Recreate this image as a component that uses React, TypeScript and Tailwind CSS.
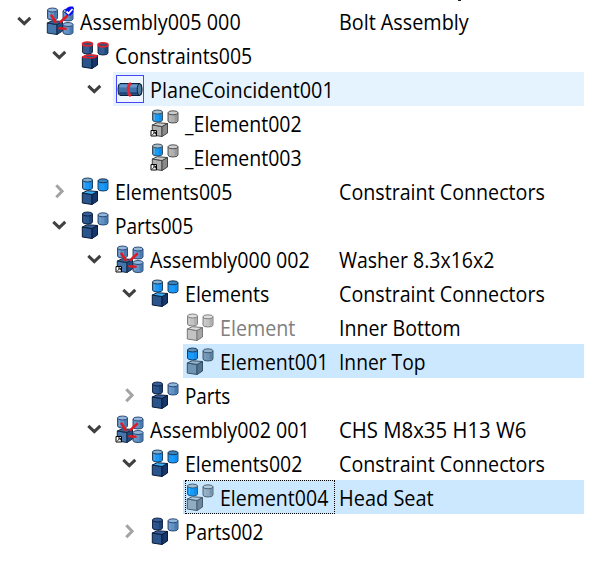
import { useLayoutEffect, useRef, useState } from "react";

type Tone = { body: string; top: string; dark: string; line: string };

const STEEL: Tone = { body: "#4577ad", top: "#3c638f", dark: "#234a7c", line: "#12294a" };
const NAVY: Tone = { body: "#2a548c", top: "#35609a", dark: "#15376b", line: "#0a1c3a" };
const BRIGHT: Tone = { body: "#1a9bfc", top: "#7fb0d2", dark: "#0c84e8", line: "#12304f" };
const SKY: Tone = { body: "#169bf8", top: "#a4bccb", dark: "#0b83e2", line: "#36424c" };
const GREY: Tone = { body: "#b0b0b0", top: "#cdcdcd", dark: "#8a8a8a", line: "#444444" };
const FADED: Tone = { body: "#c3c3c3", top: "#dedede", dark: "#a5a5a5", line: "#777777" };
const SLATE: Tone = { body: "#7095b5", top: "#93b3cc", dark: "#4f748f", line: "#344f68" };
const MIST: Tone = { body: "#8facc3", top: "#aec8dc", dark: "#6c879d", line: "#485b6c" };
const SOFT: Tone = { body: "#6291c4", top: "#93b6dc", dark: "#3d6ba2", line: "#20406b" };
const REDTOP: Tone = { body: "#315d96", top: "#4a4a68", dark: "#18396a", line: "#101f3c" };

function Cylinder({ x, y, w, h, t, rim }: { x: number; y: number; w: number; h: number; t: Tone; rim?: string }) {
  const r = w / 2;
  return (
    <g stroke={t.line} strokeWidth=".9">
      <path d={`M${x} ${y + 2}v${h - 4}a${r} 2 0 0 0 ${w} 0v${4 - h}z`} fill={t.body} />
      <path d={`M${x + w - 2} ${y + 3}v${h - 4.5}`} stroke={t.dark} strokeWidth="3" opacity=".6" />
      <path d={`M${x + 2} ${y + 4}v${h - 6}`} stroke={t.top} opacity=".6" />
      <ellipse cx={x + r} cy={y + 2} rx={r} ry="2" fill={t.top} stroke={rim ?? t.line} strokeWidth={rim ? 1.6 : 0.9} />
    </g>
  );
}

function Cube({ t, rim, lid }: { t: Tone; rim?: string; lid?: string }) {
  return (
    <g stroke={t.line} strokeWidth="1" strokeLinejoin="round">
      <path d="M1.300 16l9.700 1.500v10l-9.700-1.500z" fill={t.body} />
      <path d="M11 17.500l5.500-3v9.500l-5.500 3.500z" fill={t.dark} />
      <path d="M1.300 16l5-2.300 10.200.800-5.500 3z" fill={lid ?? t.top} />
      {rim && <path d="M1.800 16q3-2 7-2t7 .800q-2.500 2.200-6 2.200t-8-1z" fill={t.body} stroke={rim} strokeWidth="1.600" />}
    </g>
  );
}

function LinkArrow() {
  return (
    <g>
      <path d="M0 21.500h5.500V27H0z" fill="#fff" stroke="#000" strokeWidth="1" />
      <path d="M1.500 25.800L4 23.300M2 23h2.300v2.300" fill="none" stroke="#000" strokeWidth="1" />
    </g>
  );
}

type Kind =
  | "root" | "assembly" | "constraints" | "plane" | "linked" | "elements"
  | "parts" | "faded" | "element" | "element-light";

function Icon({ kind }: { kind: Kind }) {
  if (kind === "plane") {
    return (
      <svg className="block size-7 shrink-0 overflow-visible" viewBox="0 0 28 28">
        <rect x=".500" y=".500" width="27" height="27" fill="#eef6ff" stroke="#4646fa" />
        <path d="M4 8.500h20q2 0 2 6t-2 6H4q-2 0-2-6t2-6z" fill="#3f71aa" stroke="#0c2038" />
        <path d="M3.500 11h19" stroke="#6796c8" strokeWidth="3" />
        <path d="M3.500 18.500h19" stroke="#1d4475" strokeWidth="2.500" />
        <ellipse cx="23.500" cy="14.500" rx="2.300" ry="5.800" fill="#54799f" stroke="#0c2038" />
        <path d="M15 8.300q-2.800 1-2.800 6.200t2.800 6.200" fill="none" stroke="#e02834" strokeWidth="3" />
      </svg>
    );
  }
  if (kind === "root" || kind === "assembly") {
    return (
      <svg className="block size-7 shrink-0 overflow-visible" viewBox="0 0 28 28">
        <Cylinder x={1.5} y={1} w={10} h={12} t={SOFT} />
        <Cylinder x={17} y={2} w={10} h={12} t={SOFT} />
        <Cube t={STEEL} />
        <Cylinder x={17} y={15.5} w={10} h={12} t={SOFT} />
        <path d="M5.500 8.500l4 6.500M21 9l-6.500 6M13.500 21.300l6 .500" stroke="#e01b22" strokeWidth="2.500" strokeLinecap="round" />
        {kind === "root" ? (
          <g>
            <path d="M19.500 2.500l2-2 2.500-1h3l1 2-1 4.500-2.500 2.500h-3l-2-2z" fill="#0808f4" />
            <path d="M20.500 4.500l2 2 4-4.500" fill="none" stroke="#fff" strokeWidth="1.800" />
          </g>
        ) : (
          <LinkArrow />
        )}
      </svg>
    );
  }
  const sets: Record<string, [Tone, Tone, Tone]> = {
    constraints: [REDTOP, REDTOP, NAVY],
    linked: [SKY, GREY, GREY],
    elements: [BRIGHT, { ...BRIGHT, top: "#3d83bb" }, NAVY],
    parts: [NAVY, SOFT, NAVY],
    faded: [FADED, FADED, FADED],
    element: [{ ...BRIGHT, top: "#5a90ba" }, SLATE, SLATE],
    "element-light": [{ ...SKY, line: "#285578" }, MIST, MIST],
  };
  const [a, b, c] = sets[kind];
  const red = kind === "constraints" ? "#ea202c" : undefined;
  return (
    <svg className="block size-7 shrink-0 overflow-visible" viewBox="0 0 28 28">
      <Cylinder x={1.5} y={1} w={10} h={12} t={a} rim={red} />
      <Cylinder x={17} y={1.8} w={10} h={12.2} t={b} rim={red} />
      <Cube t={c} rim={red} lid={kind === "elements" ? "#36b2fa" : undefined} />
      {kind === "linked" && <LinkArrow />}
    </svg>
  );
}

function Chevron({ open }: { open: boolean }) {
  return (
    <svg className="block size-4" viewBox="0 0 16 16" fill="none" strokeWidth="3">
      {open ? <path d="M2.300 4.800l6 5.800 6-5.800" stroke="#404040" /> : <path d="M5.300 2.200l5.800 6-5.800 6" stroke="#a3a3a3" />}
    </svg>
  );
}

function Label({ text, width, muted }: { text: string; width: number; muted?: boolean }) {
  const ref = useRef<HTMLSpanElement>(null);
  const [scale, setScale] = useState(1);
  useLayoutEffect(() => {
    if (ref.current) setScale(width / ref.current.offsetWidth);
  }, [width]);
  return (
    <span
      ref={ref}
      className={`block w-fit shrink-0 origin-left whitespace-nowrap pt-0.5 text-[21px] leading-[34px] ${muted ? "text-[#808080]" : "text-black"}`}
      style={{ transform: `scaleX(${scale})` }}
    >
      {text}
    </span>
  );
}

type Row = {
  level: number;
  kind: Kind;
  name: string;
  w: number;
  open?: boolean;
  note?: string;
  nw?: number;
  state?: "hover" | "selected" | "focused";
};

const rows: Row[] = [
  { level: 0, kind: "root", name: "Assembly005 000", w: 161, open: true, note: "Bolt Assembly", nw: 130 },
  { level: 1, kind: "constraints", name: "Constraints005", w: 137, open: true },
  { level: 2, kind: "plane", name: "PlaneCoincident001", w: 184, open: true, state: "hover" },
  { level: 3, kind: "linked", name: "_Element002", w: 117 },
  { level: 3, kind: "linked", name: "_Element003", w: 117 },
  { level: 1, kind: "elements", name: "Elements005", w: 117, open: false, note: "Constraint Connectors", nw: 206 },
  { level: 1, kind: "parts", name: "Parts005", w: 78, open: true },
  { level: 2, kind: "assembly", name: "Assembly000 002", w: 160, open: true, note: "Washer 8.3x16x2", nw: 155 },
  { level: 3, kind: "elements", name: "Elements", w: 84, open: true, note: "Constraint Connectors", nw: 206 },
  { level: 4, kind: "faded", name: "Element", w: 75, note: "Inner Bottom", nw: 122 },
  { level: 4, kind: "element", name: "Element001", w: 108, note: "Inner Top", nw: 87, state: "selected" },
  { level: 3, kind: "parts", name: "Parts", w: 45, open: false },
  { level: 2, kind: "assembly", name: "Assembly002 001", w: 160, open: true, note: "CHS M8x35 H13 W6", nw: 187 },
  { level: 3, kind: "elements", name: "Elements002", w: 117, open: true, note: "Constraint Connectors", nw: 206 },
  { level: 4, kind: "element-light", name: "Element004", w: 108, note: "Head Seat", nw: 95, state: "focused" },
  { level: 3, kind: "parts", name: "Parts002", w: 78, open: false },
];

const indents = ["pl-[10px]", "pl-[45px]", "pl-[80px]", "pl-[115px]", "pl-[150px]"];

function TreeRow({ row }: { row: Row }) {
  const tint = row.state === "hover" ? "bg-[#e5f3ff]" : row.state ? "bg-[#cce8ff]" : "";
  return (
    <div className={`flex h-[34px] w-[584px] shrink-0 ${indents[row.level]}`}>
      <div className="flex w-[33px] shrink-0 items-center pl-[6px]">
        {row.open !== undefined && <Chevron open={row.open} />}
      </div>
      <div className={`flex min-w-0 grow ${tint}`}>
        <div className="relative flex min-w-0 grow items-center gap-[6px] pl-[3px]">
          <Icon kind={row.kind} />
          <Label text={row.name} width={row.w} muted={row.kind === "faded"} />
          {row.state === "focused" && (
            <div className="absolute inset-y-0 right-0 left-[2px] border border-dotted border-black" />
          )}
        </div>
        <div className="flex w-[249px] shrink-0 items-center pl-[4px]">
          {row.note && <Label text={row.note} width={row.nw ?? 0} />}
        </div>
      </div>
    </div>
  );
}

export default function App() {
  return (
    <main className="h-[564px] w-[595px] overflow-hidden bg-white font-['Open_Sans','Noto_Sans',sans-serif]">
      <div className="flex h-1 items-start pl-[458px]">
        <div className="h-px w-[3px] bg-[#222222]" />
      </div>
      {rows.map((row, i) => (
        <TreeRow key={i} row={row} />
      ))}
    </main>
  );
}
